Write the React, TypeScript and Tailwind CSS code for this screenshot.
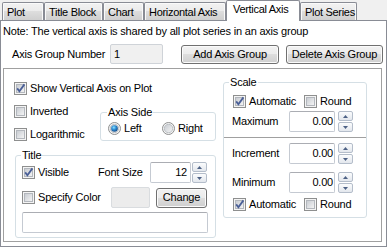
import React from "react";

function Check({ checked }: { checked?: boolean }) {
  return (
    <svg width="13" height="13" viewBox="0 0 13 13" className="block shrink-0">
      <defs>
        <linearGradient id="cbg" x1="0" y1="0" x2="1" y2="1">
          <stop offset="0" stopColor="#c6cad0" />
          <stop offset="1" stopColor="#f6f6f6" />
        </linearGradient>
      </defs>
      <rect x="0.5" y="0.5" width="12" height="12" fill="#f4f4f4" stroke="#8e8f8f" />
      <rect x="2.5" y="2.5" width="8" height="8" fill="url(#cbg)" stroke="#b3b7bd" />
      {checked && (
        <path d="M3.2 6.4 L5.4 9.2 L10.4 2.4" fill="none" stroke="#4a5f97" strokeWidth="1.8" />
      )}
    </svg>
  );
}

function Radio({ checked }: { checked?: boolean }) {
  return (
    <svg width="13" height="13" viewBox="0 0 13 13" className="block shrink-0">
      <defs>
        <linearGradient id="rbg" x1="0" y1="0" x2="1" y2="1">
          <stop offset="0" stopColor="#c6cad0" />
          <stop offset="1" stopColor="#f6f6f6" />
        </linearGradient>
        <radialGradient id="rdot" cx="0.4" cy="0.35" r="0.7">
          <stop offset="0" stopColor="#8fe3ff" />
          <stop offset="0.45" stopColor="#2f8fd6" />
          <stop offset="1" stopColor="#15467f" />
        </radialGradient>
      </defs>
      <circle cx="6.5" cy="6.5" r="6" fill="#f4f4f4" stroke="#8e8f8f" />
      <circle cx="6.5" cy="6.5" r="4.2" fill="url(#rbg)" stroke="#b3b7bd" strokeWidth="0.8" />
      {checked && <circle cx="6.5" cy="6.5" r="3.3" fill="url(#rdot)" />}
    </svg>
  );
}

function Spin() {
  return (
    <div className="flex flex-col gap-[1px] w-[15px] h-[21px] shrink-0">
      <div className="flex-1 border border-[#b4bdca] rounded-[2px] bg-[linear-gradient(#fbfcfd,#e3e7ed)] flex items-center justify-center">
        <svg width="5" height="3" viewBox="0 0 5 3" className="block">
          <path d="M0 3 L2.5 0 L5 3Z" fill="#4d6185" />
        </svg>
      </div>
      <div className="flex-1 border border-[#b4bdca] rounded-[2px] bg-[linear-gradient(#fbfcfd,#e3e7ed)] flex items-center justify-center">
        <svg width="5" height="3" viewBox="0 0 5 3" className="block">
          <path d="M0 0 L2.5 3 L5 0Z" fill="#4d6185" />
        </svg>
      </div>
    </div>
  );
}

function Tab({ w, children }: { w: string; children: React.ReactNode }) {
  return (
    <div
      className={`${w} h-[18px] shrink-0 border border-b-0 border-[#898c95] rounded-t-[2px] bg-[linear-gradient(#f2f2f2,#ebebeb_50%,#dddddd_50%,#cfcfcf)] shadow-[inset_1px_1px_0_#fafafa,inset_-1px_0_0_#fafafa] pl-[4px] pt-[3px] whitespace-nowrap tracking-[-0.3px]`}
    >
      {children}
    </div>
  );
}

function CheckLabel({ checked, label, w }: { checked?: boolean; label: string; w?: string }) {
  return (
    <div className={`flex items-center gap-[3px] whitespace-nowrap ${w ?? ""}`}>
      <Check checked={checked} />
      <span>{label}</span>
    </div>
  );
}

const btn =
  "border border-[#707070] rounded-[3px] bg-[linear-gradient(#f2f2f2,#ebebeb_50%,#dddddd_50%,#cfcfcf)] shadow-[inset_0_0_0_1px_#fbfbfb] flex items-center justify-center whitespace-nowrap shrink-0";

function NumRow({ label, value }: { label: string; value: string }) {
  return (
    <div className="flex items-center h-[21px] pl-[8px]">
      <span className="w-[57px] shrink-0">{label}</span>
      <div className="w-[46px] h-[21px] shrink-0 border border-[#c5cad2] border-t-[#abadb3] rounded-[2px] bg-white flex items-center justify-end pr-[1px]">
        {value}
      </div>
      <div className="ml-[3px]">
        <Spin />
      </div>
    </div>
  );
}

export default function App() {
  return (
    <div className="w-[387px] h-[247px] bg-[#f0f0f0] overflow-hidden font-['Liberation_Sans',Arial,sans-serif] text-[11px] leading-[13px] tracking-[-0.2px] text-black">
      <div className="flex items-end h-[20px] pl-[2px]">
        <Tab w="w-[42px]">Plot</Tab>
        <Tab w="w-[59px]">Title Block</Tab>
        <Tab w="w-[41px]">Chart</Tab>
        <Tab w="w-[82px]">Horizontal Axis</Tab>
        <div className="relative z-10 w-[74px] h-[21px] -mb-px shrink-0 border border-b-0 border-[#898c95] rounded-t-[2px] bg-white pl-[6px] pt-[2px] whitespace-nowrap tracking-[-0.3px]">
          Vertical Axis
        </div>
        <Tab w="w-[57px]">Plot Series</Tab>
      </div>

      <div className="w-[387px] h-[227px] border border-[#898c95] bg-white">
        <div className="pt-[4px] pl-[2px] whitespace-nowrap">
          Note: The vertical axis is shared by all plot series in an axis group
        </div>

        <div className="flex mt-[6px] ml-[11px] h-[20px]">
          <div className="w-[98px] shrink-0 flex items-center whitespace-nowrap">Axis Group Number</div>
          <div className="w-[53px] h-[20px] shrink-0 border border-[#cfd3d8] rounded-[2px] bg-[#f0f0f0] flex items-center pl-[3px]">
            1
          </div>
          <div className={`${btn} ml-[18px] mt-[1px] w-[98px] h-[19px]`}>Add Axis Group</div>
          <div className={`${btn} ml-[7px] mt-[1px] w-[97px] h-[19px]`}>Delete Axis Group</div>
        </div>

        <div className="mt-[4px] ml-[2px] w-[379px] h-[174px] border border-[#a0a0a0] flex">
          {/* left column */}
          <div className="ml-[10px] w-[202px] flex flex-col shrink-0">
            <div className="mt-[13px]">
              <CheckLabel checked label="Show Vertical Axis on Plot" />
            </div>
            <div className="flex mt-[10px]">
              <div className="w-[86px] flex flex-col shrink-0">
                <CheckLabel label="Inverted" />
                <div className="mt-[10px]">
                  <CheckLabel label="Logarithmic" />
                </div>
              </div>
              <fieldset className="mt-[1px] w-[116px] border border-[#d5dfe5] rounded-[3px]">
                <legend className="ml-[6px] px-[1px] leading-[13px]">Axis Side</legend>
                <div className="flex items-center pt-[3px] pb-[4px] pl-[7px]">
                  <div className="w-[54px] flex items-center gap-[3px]">
                    <Radio checked />
                    <span>Left</span>
                  </div>
                  <div className="flex items-center gap-[3px]">
                    <Radio />
                    <span>Right</span>
                  </div>
                </div>
              </fieldset>
            </div>

            <fieldset className="mt-[8px] ml-[1px] w-[201px] border border-[#d5dfe5] rounded-[3px] pb-[4px]">
              <legend className="ml-[5px] px-[1px] leading-[13px]">Title</legend>
              <div className="flex items-center h-[21px] pl-[6px]">
                <CheckLabel checked label="Visible" w="w-[76px] shrink-0" />
                <span className="w-[52px] shrink-0 whitespace-nowrap">Font Size</span>
                <div className="w-[41px] h-[21px] shrink-0 border border-[#c5cad2] border-t-[#abadb3] rounded-[2px] bg-white flex items-center justify-end pr-[3px]">
                  12
                </div>
                <div className="ml-[1px]">
                  <Spin />
                </div>
              </div>
              <div className="flex items-center h-[21px] mt-[4px] pl-[6px]">
                <CheckLabel label="Specify Color" w="w-[89px] shrink-0" />
                <div className="w-[39px] h-[21px] shrink-0 border border-[#d9dcdf] rounded-[2px] bg-[#ececec]" />
                <div className={`${btn} ml-[6px] w-[51px] h-[20px]`}>Change</div>
              </div>
              <div className="mt-[4px] ml-[6px] w-[186px] h-[21px] border border-[#c5cad2] border-t-[#abadb3] rounded-[2px] bg-white" />
            </fieldset>
          </div>

          {/* scale */}
          <fieldset className="ml-[7px] mt-[7px] self-start w-[144px] border border-[#d5dfe5] rounded-[3px] pt-[6px] pb-[6px]">
            <legend className="ml-[5px] px-[1px] leading-[13px]">Scale</legend>
            <div className="flex items-center h-[13px] pl-[9px]">
              <CheckLabel checked label="Automatic" w="w-[71px] shrink-0" />
              <CheckLabel label="Round" />
            </div>
            <div className="mt-[3px]">
              <NumRow label="Maximum" value="0.00" />
            </div>
            <div className="mt-[5px] h-px bg-[#a0a0a0]" />
            <div className="mt-[5px]">
              <NumRow label="Increment" value="0.00" />
            </div>
            <div className="mt-[8px]">
              <NumRow label="Minimum" value="0.00" />
            </div>
            <div className="mt-[5px] flex items-center h-[13px] pl-[9px]">
              <CheckLabel checked label="Automatic" w="w-[71px] shrink-0" />
              <CheckLabel label="Round" />
            </div>
          </fieldset>
        </div>
      </div>
    </div>
  );
}
